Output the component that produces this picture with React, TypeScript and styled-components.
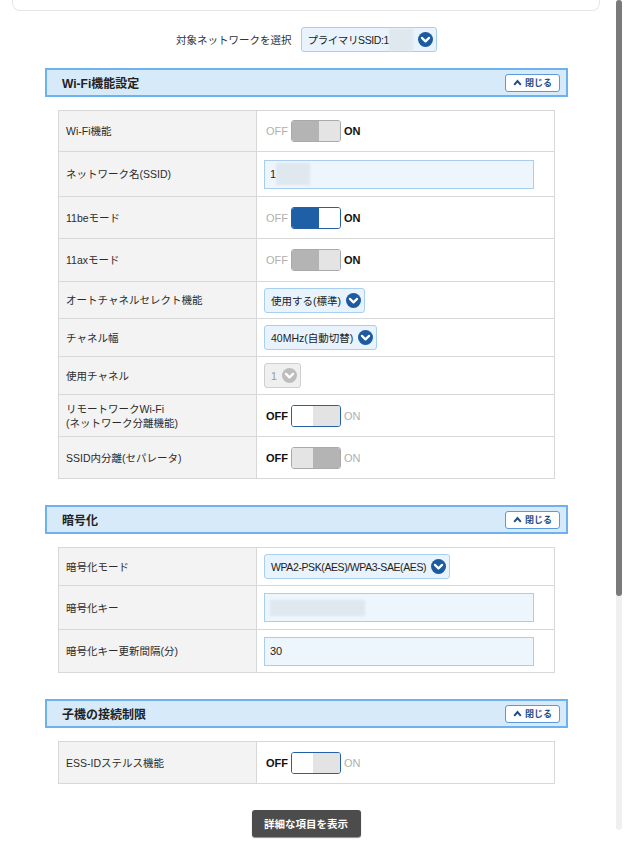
import React from "react";
import styled, { createGlobalStyle } from "styled-components";

const GlobalStyle = createGlobalStyle`
  html, body {
    margin: 0;
    padding: 0;
    background: #ffffff;
    overflow: hidden;
  }
  body {
    font-family: "Liberation Sans", "Noto Sans CJK JP", Arial, sans-serif;
    color: #333;
    font-size: 10.5px;
  }
  * { box-sizing: border-box; }
`;

//styled-components
const Page = styled.div`
  width: 612px;
  padding-bottom: 20px;
`;
const TopCard = styled.div`
  margin: 0 12px;
  height: 11px;
  border: 1px solid #e6e6e6;
  border-top: none;
  border-radius: 0 0 8px 8px;
`;
const TargetRow = styled.div`
  display: flex;
  justify-content: center;
  align-items: center;
  gap: 9px;
  margin: 16px 44px 16px 45px;
  font-size: 10.5px;
  color: #333;
`;
const Section = styled.section`
  margin: 0 44px 26px 45px;
`;
const SectionHeader = styled.div`
  display: flex;
  justify-content: space-between;
  align-items: center;
  height: 29px;
  padding: 0 6px 0 15px;
  background: #d7eafa;
  border: 2px solid #6db2ee;
  h2{
    margin: 0;
    font-size: 12px;
    font-weight: bold;
    color: #222;
  }
`;
const CloseButton = styled.button`
  display: flex;
  align-items: center;
  justify-content: center;
  gap: 3px;
  width: 55px;
  height: 18px;
  padding: 0;
  background: #fff;
  border: 1px solid #5b9ad8;
  border-radius: 3px;
  font-family: inherit;
  font-size: 9px;
  font-weight: bold;
  color: #1f4e85;
`;
const Table = styled.div`
  margin: 13px 13px 0;
  border: 1px solid #d8d8d8;
  border-bottom: none;
`;
const Row = styled.div<{ $h: number }>`
  display: grid;
  grid-template-columns: 198px 1fr;
  height: ${(p) => p.$h}px;
  border-bottom: 1px solid #d8d8d8;
`;
const Label = styled.div`
  display: flex;
  align-items: center;
  padding-left: 7px;
  background: #f3f3f3;
  border-right: 1px solid #d8d8d8;
  font-size: 10.5px;
  line-height: 14px;
  color: #2b2b2b;
`;
const Value = styled.div`
  display: flex;
  align-items: center;
  padding-left: 7px;
`;
const SwitchWrap = styled.div`
  display: flex;
  align-items: center;
  gap: 3px;
  padding-left: 2px;
`;
const SwitchText = styled.span<{ $active: boolean }>`
  font-size: 11px;
  font-weight: ${(p) => (p.$active ? "bold" : "normal")};
  color: ${(p) => (p.$active ? "#111" : "#b0b0b0")};
`;
const Track = styled.div<{ $on: boolean; $disabled: boolean }>`
  display: flex;
  flex-direction: ${(p) => (p.$on ? "row" : "row-reverse")};
  width: 50px;
  height: 22px;
  border: 1px solid ${(p) => (p.$disabled ? "#a9a9a9" : "#2561a7")};
  border-radius: 3px;
  overflow: hidden;
`;
const Fill = styled.div<{ $on: boolean; $disabled: boolean }>`
  flex: 1;
  background: ${(p) =>
    p.$disabled ? "#b4b4b4" : p.$on ? "#1f5fa6" : "#e3e3e3"};
`;
const Knob = styled.div<{ $disabled: boolean }>`
  width: 21px;
  background: ${(p) => (p.$disabled ? "#e4e4e4" : "#ffffff")};
`;
const SelectBox = styled.div<{ $disabled?: boolean }>`
  display: flex;
  align-items: center;
  justify-content: space-between;
  gap: 5px;
  height: 25px;
  padding: 0 3px 0 6px;
  background: ${(p) => (p.$disabled ? "#efefef" : "#e8f3fd")};
  border: 1px solid ${(p) => (p.$disabled ? "#cfcfcf" : "#a9cfee")};
  border-radius: 3px;
  font-size: 10.5px;
  color: ${(p) => (p.$disabled ? "#999" : "#222")};
  white-space: nowrap;
  svg{
    flex-shrink: 0;
  }
`;
const SelectText = styled.span<{ $tight?: boolean }>`
  display: flex;
  align-items: center;
  letter-spacing: ${(p) => (p.$tight ? "-0.4px" : "0")};
`;
const Blur = styled.span<{ $w: number; $h?: number }>`
  display: inline-block;
  width: ${(p) => p.$w}px;
  height: ${(p) => p.$h ?? 20}px;
  background: #dfe7ef;
  filter: blur(1px);
`;
const TextInput = styled.div`
  display: flex;
  align-items: center;
  width: 270px;
  height: 29px;
  padding-left: 5px;
  background: #edf5fd;
  border: 1px solid #a8cdee;
  font-size: 11px;
  color: #222;
`;
const Footer = styled.div`
  display: flex;
  justify-content: center;
  margin-top: 0px;
`;
const DetailButton = styled.button`
  width: 109px;
  height: 27px;
  background: #4c4c4c;
  border: none;
  border-radius: 3px;
  box-shadow: 0 1px 1px rgba(0, 0, 0, 0.45);
  font-family: inherit;
  font-size: 10.5px;
  font-weight: bold;
  color: #fff;
`;
const ScrollBar = styled.div`
  position: fixed;
  top: 0;
  right: 2px;
  width: 6px;
  height: 830px;
  border-radius: 3px;
  background: #f0f0f0;
`;
const ScrollThumb = styled.div`
  height: 596px;
  border-radius: 3px;
  background: #7a7a7a;
`;

function Chevron({ disabled }: { disabled?: boolean }) {
  return (
    <svg width="15" height="15" viewBox="0 0 16 16">
      <circle cx="8" cy="8" r="8" fill={disabled ? "#bdbdbd" : "#1d5a9f"} />
      <polyline
        points="4.2,6.3 8,10 11.8,6.3"
        fill="none"
        stroke="#fff"
        strokeWidth="2.4"
        strokeLinecap="round"
        strokeLinejoin="round"
      />
    </svg>
  );
}

function Close() {
  return (
    <CloseButton>
      <svg width="9" height="7" viewBox="0 0 9 7">
        <polyline
          points="1.2,5.8 4.5,2 7.8,5.8"
          fill="none"
          stroke="#1f4e85"
          strokeWidth="2"
        />
      </svg>
      閉じる
    </CloseButton>
  );
}

function Switch({ on, disabled }: { on: boolean; disabled?: boolean }) {
  const dis = !!disabled;
  return (
    <SwitchWrap>
      <SwitchText $active={!on}>OFF</SwitchText>
      <Track $on={on} $disabled={dis}>
        <Fill $on={on} $disabled={dis} />
        <Knob $disabled={dis} />
      </Track>
      <SwitchText $active={on}>ON</SwitchText>
    </SwitchWrap>
  );
}

function Select({ children, disabled, tight }: { children: React.ReactNode; disabled?: boolean; tight?: boolean }) {
  return (
    <SelectBox $disabled={disabled}>
      <SelectText $tight={tight}>{children}</SelectText>
      <Chevron disabled={disabled} />
    </SelectBox>
  );
}

export default function App() {
  return (
    <>
      <GlobalStyle />
      <Page>
        <TopCard />
        <TargetRow>
          <span>対象ネットワークを選択</span>
          <Select tight>
            プライマリSSID:1<Blur $w={24} $h={22} />
          </Select>
        </TargetRow>

        <Section>
          <SectionHeader>
            <h2>Wi-Fi機能設定</h2>
            <Close />
          </SectionHeader>
          <Table>
            <Row $h={41}>
              <Label>Wi-Fi機能</Label>
              <Value><Switch on disabled /></Value>
            </Row>
            <Row $h={45}>
              <Label>ネットワーク名(SSID)</Label>
              <Value>
                <TextInput>1<Blur $w={34} $h={22} /></TextInput>
              </Value>
            </Row>
            <Row $h={42}>
              <Label>11beモード</Label>
              <Value><Switch on /></Value>
            </Row>
            <Row $h={43}>
              <Label>11axモード</Label>
              <Value><Switch on disabled /></Value>
            </Row>
            <Row $h={37}>
              <Label>オートチャネルセレクト機能</Label>
              <Value><Select>使用する(標準)</Select></Value>
            </Row>
            <Row $h={38}>
              <Label>チャネル幅</Label>
              <Value><Select>40MHz(自動切替)</Select></Value>
            </Row>
            <Row $h={38}>
              <Label>使用チャネル</Label>
              <Value><Select disabled>1</Select></Value>
            </Row>
            <Row $h={42}>
              <Label>
                リモートワークWi-Fi
                <br />
                (ネットワーク分離機能)
              </Label>
              <Value><Switch on={false} /></Value>
            </Row>
            <Row $h={42}>
              <Label>SSID内分離(セパレータ)</Label>
              <Value><Switch on={false} disabled /></Value>
            </Row>
          </Table>
        </Section>

        <Section>
          <SectionHeader>
            <h2>暗号化</h2>
            <Close />
          </SectionHeader>
          <Table>
            <Row $h={38}>
              <Label>暗号化モード</Label>
              <Value><Select tight>WPA2-PSK(AES)/WPA3-SAE(AES)</Select></Value>
            </Row>
            <Row $h={44}>
              <Label>暗号化キー</Label>
              <Value>
                <TextInput><Blur $w={95} $h={16} /></TextInput>
              </Value>
            </Row>
            <Row $h={43}>
              <Label>暗号化キー更新間隔(分)</Label>
              <Value><TextInput>30</TextInput></Value>
            </Row>
          </Table>
        </Section>

        <Section>
          <SectionHeader>
            <h2>子機の接続制限</h2>
            <Close />
          </SectionHeader>
          <Table>
            <Row $h={42}>
              <Label>ESS-IDステルス機能</Label>
              <Value><Switch on={false} /></Value>
            </Row>
          </Table>
        </Section>

        <Footer>
          <DetailButton>詳細な項目を表示</DetailButton>
        </Footer>
      </Page>
      <ScrollBar>
        <ScrollThumb />
      </ScrollBar>
    </>
  );
}
